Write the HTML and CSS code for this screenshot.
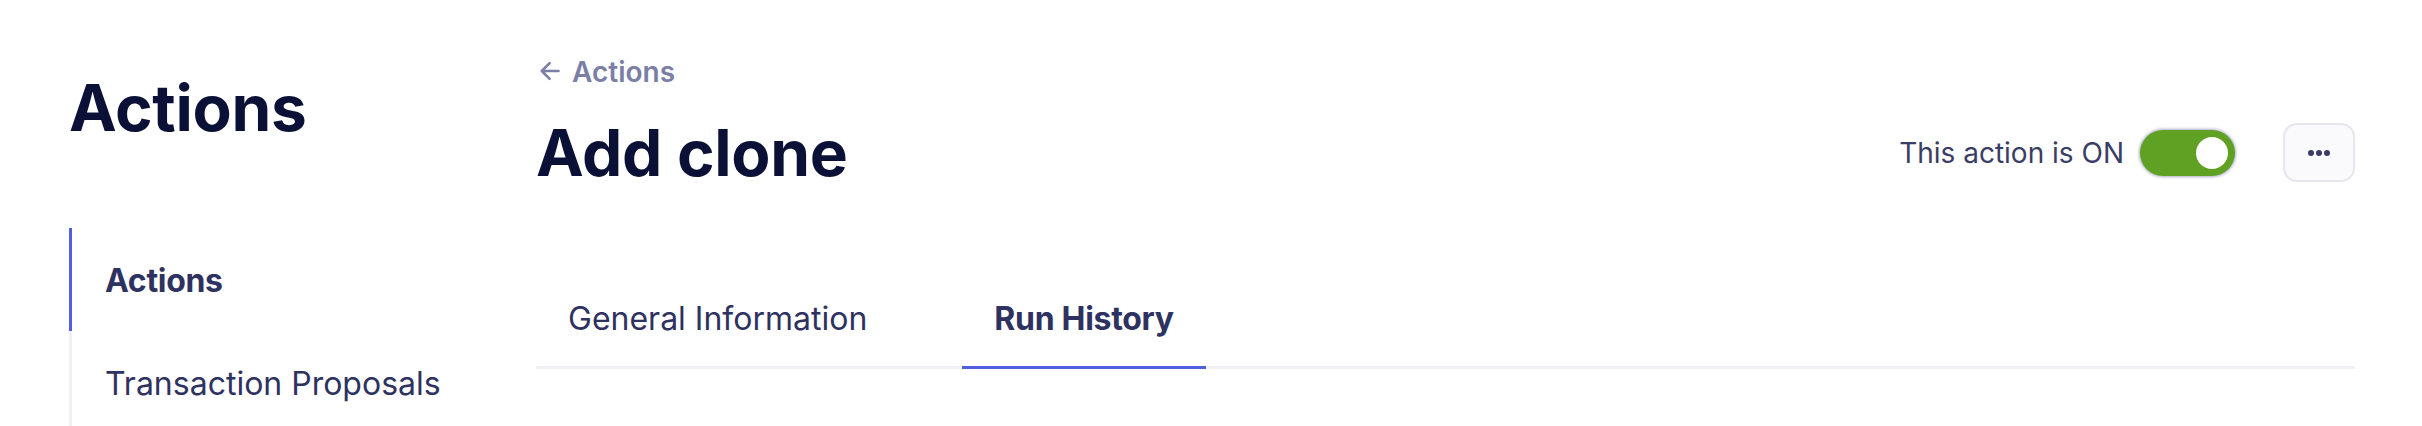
FILE: index.html
```html
<!DOCTYPE html>
<html lang="en">
<head>
<meta charset="utf-8">
<title>Add clone - Actions</title>
<link rel="stylesheet" href="styles.css">
</head>
<body>
<div class="page">
  <aside class="sidebar">
    <h1 class="sidebar-title">Actions</h1>
    <nav class="side-nav">
      <a class="side-item active" href="#">Actions</a>
      <a class="side-item" href="#">Transaction Proposals</a>
    </nav>
  </aside>
  <main class="main">
    <a class="breadcrumb" href="#">
      <svg class="bc-arrow" width="20" height="20" viewBox="0 0 20 20" fill="none" stroke="currentColor" stroke-width="2.6" stroke-linecap="round" stroke-linejoin="round"><path d="M18.5 10H1.8M9.6 2.2L1.8 10l7.8 7.8"/></svg>
      <span>Actions</span>
    </a>
    <div class="header-row">
      <h2 class="page-title">Add clone</h2>
      <div class="header-actions">
        <span class="toggle-label">This action is ON</span>
        <span class="toggle"><span class="knob"></span></span>
        <button class="more-btn" type="button" aria-label="More">
          <span class="dot"></span><span class="dot"></span><span class="dot"></span>
        </button>
      </div>
    </div>
    <div class="tabs">
      <a class="tab" href="#">General Information</a>
      <a class="tab active" href="#">Run History</a>
    </div>
  </main>
</div>
</body>
</html>
```

FILE: styles.css
```css
html, body {
  margin: 0;
  padding: 0;
  background: #ffffff;
}

body {
  font-family: Inter, "Noto Sans", "Liberation Sans", sans-serif;
  color: #2e3260;
  height: 426px;
  overflow: hidden;
}

a {
  text-decoration: none;
  color: inherit;
}

.page {
  display: flex;
  padding: 0 67px 0 69px;
}

.sidebar {
  width: 403px;
  flex: 0 0 403px;
  padding-top: 69px;
  margin-right: 64px;
}

.sidebar-title {
  margin: 0;
  font-size: 64px;
  line-height: 77px;
  font-weight: 700;
  color: #0b1136;
  letter-spacing: -0.3px;
}

.side-nav {
  display: flex;
  flex-direction: column;
  margin-top: 82px;
}

.side-item {
  display: block;
  border-left: 3px solid #f0f0f5;
  padding: 29px 0 27px 33px;
  font-size: 32px;
  line-height: 47px;
  color: #2e3260;
}

.side-item.active {
  border-left-color: #4f5fe0;
  font-weight: 700;
  letter-spacing: -0.3px;
}

.main {
  flex: 1;
  min-width: 0;
  padding-top: 55px;
}

.breadcrumb {
  display: inline-flex;
  align-items: center;
  gap: 12px;
  font-size: 28px;
  line-height: 34px;
  font-weight: 600;
  color: #7b7fa6;
  padding-left: 4px;
}

.bc-arrow {
  display: block;
  margin-top: -3px;
}

.header-row {
  display: flex;
  align-items: center;
  justify-content: space-between;
  margin-top: 25px;
}

.page-title {
  margin: 0;
  font-size: 64px;
  line-height: 77px;
  font-weight: 700;
  color: #0b1136;
  letter-spacing: -0.3px;
}

.header-actions {
  display: flex;
  align-items: center;
}

.toggle-label {
  font-size: 28px;
  line-height: 34px;
  color: #3a3d66;
  margin-right: 16px;
}

.toggle {
  display: flex;
  align-items: center;
  justify-content: flex-end;
  width: 95px;
  height: 46px;
  box-sizing: border-box;
  padding: 0 7px;
  border-radius: 23px;
  background: #5ea123;
  box-shadow: 0 0 3px 1px rgba(70, 70, 130, 0.45);
}

.knob {
  width: 32px;
  height: 32px;
  border-radius: 50%;
  background: #ffffff;
}

.more-btn {
  display: flex;
  align-items: center;
  justify-content: center;
  gap: 2px;
  width: 72px;
  height: 59px;
  margin-left: 48px;
  padding: 0;
  border: 2px solid #e6e6ee;
  border-radius: 14px;
  background: #fafafc;
  cursor: pointer;
}

.dot {
  width: 6px;
  height: 6px;
  border-radius: 50%;
  background: #3a3d6a;
}

.tabs {
  display: flex;
  gap: 63px;
  margin-top: 80px;
  border-bottom: 3px solid #f0f0f5;
}

.tab {
  display: block;
  padding: 24px 32px 23px;
  margin-bottom: -3px;
  border-bottom: 3px solid transparent;
  font-size: 32px;
  line-height: 48px;
  color: #2e3260;
}

.tab.active {
  border-bottom-color: #4f5fe0;
  font-weight: 700;
  letter-spacing: -0.3px;
}
```
